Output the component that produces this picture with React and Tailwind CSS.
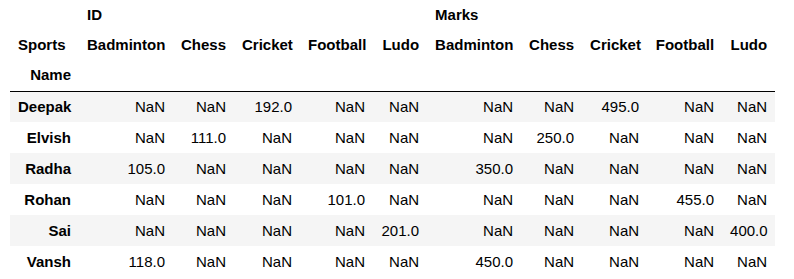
import React from 'react';

const sports = ['Badminton', 'Chess', 'Cricket', 'Football', 'Ludo'];

const rows = [
  { name: 'Deepak', id: ['NaN', 'NaN', '192.0', 'NaN', 'NaN'], marks: ['NaN', 'NaN', '495.0', 'NaN', 'NaN'] },
  { name: 'Elvish', id: ['NaN', '111.0', 'NaN', 'NaN', 'NaN'], marks: ['NaN', '250.0', 'NaN', 'NaN', 'NaN'] },
  { name: 'Radha', id: ['105.0', 'NaN', 'NaN', 'NaN', 'NaN'], marks: ['350.0', 'NaN', 'NaN', 'NaN', 'NaN'] },
  { name: 'Rohan', id: ['NaN', 'NaN', 'NaN', '101.0', 'NaN'], marks: ['NaN', 'NaN', 'NaN', '455.0', 'NaN'] },
  { name: 'Sai', id: ['NaN', 'NaN', 'NaN', 'NaN', '201.0'], marks: ['NaN', 'NaN', 'NaN', 'NaN', '400.0'] },
  { name: 'Vansh', id: ['118.0', 'NaN', 'NaN', 'NaN', 'NaN'], marks: ['450.0', 'NaN', 'NaN', 'NaN', 'NaN'] },
];

const App = () => {
  return (
    <div className="bg-white pl-[10px] text-black text-[15px] font-['Liberation_Sans',Arial,sans-serif]">
      <table className="border-collapse table-fixed w-[765px] whitespace-nowrap">
        <colgroup>
          <col className="w-[69px]" />
          <col className="w-[94px]" />
          <col className="w-[61px]" />
          <col className="w-[66px]" />
          <col className="w-[73px]" />
          <col className="w-[54px]" />
          <col className="w-[94px]" />
          <col className="w-[61px]" />
          <col className="w-[65px]" />
          <col className="w-[75px]" />
          <col className="w-[53px]" />
        </colgroup>
        <thead className="border-b border-black">
          <tr className="h-[30px]">
            <th className="px-2 leading-[16px]"></th>
            <th colSpan={5} className="px-2 leading-[16px] text-left font-bold">ID</th>
            <th colSpan={5} className="px-2 leading-[16px] text-left font-bold">Marks</th>
          </tr>
          <tr className="h-[30px]">
            <th className="px-2 leading-[16px] text-left font-bold">Sports</th>
            {[...sports, ...sports].map((s, i) => (
              <th key={i} className="px-2 leading-[16px] text-right font-bold">{s}</th>
            ))}
          </tr>
          <tr className="h-[31px]">
            <th className="px-2 leading-[16px] text-right font-bold">Name</th>
            {[...sports, ...sports].map((s, i) => (
              <th key={i} className="px-2"></th>
            ))}
          </tr>
        </thead>
        <tbody>
          {rows.map((r, i) => (
            <tr key={r.name} className={`h-[31px] ${i % 2 === 0 ? 'bg-[#f5f5f5]' : 'bg-white'}`}>
              <th className="px-2 leading-[17px] text-right font-bold">{r.name}</th>
              {[...r.id, ...r.marks].map((v, j) => (
                <td key={j} className="px-2 leading-[17px] text-right">{v}</td>
              ))}
            </tr>
          ))}
        </tbody>
      </table>
    </div>
  );
};

export default App;
